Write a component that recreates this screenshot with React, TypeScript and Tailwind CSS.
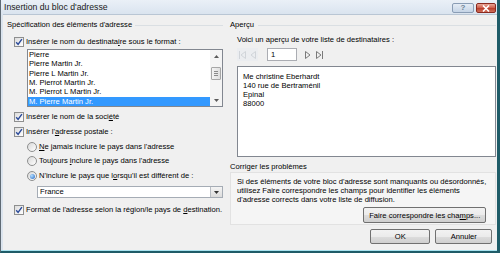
import React from "react";

function CheckBox() {
  return (
    <span className="flex h-[10px] w-[10px] shrink-0 items-center justify-center border border-[#8e8f8f] bg-[linear-gradient(135deg,#dcdcdc,#ffffff)]">
      <svg width="8" height="8" viewBox="0 0 8 8">
        <path d="M1.2 4.2 L3.1 6.4 L6.9 1.2" fill="none" stroke="#2a4a9a" strokeWidth="1.4" />
      </svg>
    </span>
  );
}

function Radio({ checked = false }: { checked?: boolean }) {
  return (
    <span className="flex h-[10px] w-[10px] shrink-0 items-center justify-center rounded-full border border-[#8e8f8f] bg-[linear-gradient(135deg,#d8d8d8,#ffffff)]">
      {checked && (
        <span className="h-[5px] w-[5px] rounded-full bg-[radial-gradient(circle_at_35%_35%,#b6e0ff,#1f63c4)]" />
      )}
    </span>
  );
}

function Button({ children, className = "" }: { children: React.ReactNode; className?: string }) {
  return (
    <div
      className={
        "flex items-center justify-center rounded-[2px] border border-[#707070] bg-[linear-gradient(#f2f2f2,#ebebeb_50%,#dddddd_50%,#cfcfcf)] " +
        className
      }
    >
      {children}
    </div>
  );
}

const names = [
  "Pierre",
  "Pierre Martin Jr.",
  "Pierre L Martin Jr.",
  "M. Pierrot Martin Jr.",
  "M. Pierrot L Martin Jr.",
  "M. Pierre Martin Jr.",
];

export default function App() {
  return (
    <div className="flex h-[253px] w-[500px] flex-col overflow-hidden whitespace-nowrap border-l border-r-[3px] border-b-[2px] border-l-[#5f6a74] border-r-[#1f5c68] border-b-[#1f5c68] bg-[#dbe4ee] font-['Liberation_Sans',Arial,sans-serif] text-[7.6px] leading-none text-black">
      {/* title bar */}
      <div className="flex h-[14px] shrink-0 items-start bg-[linear-gradient(#eaf0f7,#dae4ef)] pl-[3px] pr-[1px]">
        <span className="mt-[3px] text-[8.7px] text-[#1a1a1a]">Insertion du bloc d'adresse</span>
        <div className="ml-auto mt-[3px] flex gap-[2px]">
          <div className="flex h-[10px] w-[22px] items-center justify-center rounded-[2px] border border-[#8a9db5] bg-[linear-gradient(#e4ecf5,#c5d4e6)] text-[8px] font-bold text-[#6c7f96]">
            ?
          </div>
          <div className="flex h-[10px] w-[20px] items-center justify-center rounded-[2px] border border-[#8a2a20] bg-[linear-gradient(#e9a797,#cd5a48_50%,#b83a28_50%,#d0705a)]">
            <svg width="8" height="7" viewBox="0 0 8 7">
              <path d="M1 0.5 L7 6.5 M7 0.5 L1 6.5" stroke="#fff" strokeWidth="1.6" />
            </svg>
          </div>
        </div>
      </div>

      {/* content */}
      <div className="ml-[2px] flex flex-1 border-t border-[#b9c6d4] bg-[#f0f0f0] pt-[4px]">
        {/* left column */}
        <div className="flex w-[223px] shrink-0 flex-col pl-[4px] pr-[3px]">
          <div className="flex h-[12px] items-center">
            <span>Spécification des éléments d'adresse</span>
            <span className="ml-[3px] h-px flex-1 bg-[#dadfe3]" />
          </div>

          <div className="ml-[7px] mt-[6px] flex h-[10px] items-center gap-[2px]">
            <CheckBox />
            <span>
              Insérer le nom du destinata<u>i</u>re sous le format :
            </span>
          </div>

          <div className="ml-[20px] mt-[2px] flex h-[58px] border border-[#828790] bg-white">
            <div className="flex flex-1 flex-col">
              {names.map((n, i) => (
                <div
                  key={n}
                  className={
                    "flex flex-1 items-center pl-[1px] " + (i === 5 ? "bg-[#3399ff] text-white" : "")
                  }
                >
                  {n}
                </div>
              ))}
            </div>
            <div className="flex w-[12px] flex-col items-center bg-[#f4f4f4]">
              <div className="flex h-[12px] items-center justify-center">
                <svg width="5" height="3" viewBox="0 0 5 3">
                  <path d="M0 3 L2.5 0 L5 3 Z" fill="#5a5a5a" />
                </svg>
              </div>
              <div className="mt-[5px] flex h-[13px] w-[10px] flex-col items-center justify-center gap-[1px] rounded-[1px] border border-[#a6a6a6] bg-[linear-gradient(90deg,#f3f3f3,#dedede)]">
                <span className="h-px w-[4px] bg-[#8a8a8a]" />
                <span className="h-px w-[4px] bg-[#8a8a8a]" />
                <span className="h-px w-[4px] bg-[#8a8a8a]" />
              </div>
              <div className="mt-auto flex h-[12px] items-center justify-center">
                <svg width="5" height="3" viewBox="0 0 5 3">
                  <path d="M0 0 L2.5 3 L5 0 Z" fill="#5a5a5a" />
                </svg>
              </div>
            </div>
          </div>

          <div className="ml-[7px] mt-[5px] flex h-[10px] items-center gap-[2px]">
            <CheckBox />
            <span>
              Insérer le nom de la soci<u>é</u>té
            </span>
          </div>

          <div className="ml-[7px] mt-[5px] flex h-[10px] items-center gap-[2px]">
            <CheckBox />
            <span>
              Insérer l'<u>a</u>dresse postale :
            </span>
          </div>

          <div className="ml-[20px] mt-[5px] flex h-[10px] items-center gap-[2px]">
            <Radio />
            <span>
              <u>N</u>e jamais inclure le pays dans l'adresse
            </span>
          </div>
          <div className="ml-[20px] mt-[4px] flex h-[10px] items-center gap-[2px]">
            <Radio />
            <span>
              Toujours <u>i</u>nclure le pays dans l'adresse
            </span>
          </div>
          <div className="ml-[20px] mt-[5px] flex h-[10px] items-center gap-[2px]">
            <Radio checked />
            <span>
              N'inclure le pays que l<u>o</u>rsqu'il est différent de :
            </span>
          </div>

          <div className="ml-[30px] mt-[5px] flex h-[12px] items-center border border-[#a5acb5] bg-white pl-[2px]">
            <span>France</span>
            <div className="ml-auto flex h-full w-[12px] items-center justify-center border-l border-[#b8bcc2] bg-[linear-gradient(#f4f4f4,#dcdcdc)]">
              <svg width="5" height="3" viewBox="0 0 5 3">
                <path d="M0 0 L2.5 3 L5 0 Z" fill="#333" />
              </svg>
            </div>
          </div>

          <div className="ml-[7px] mt-[7px] flex h-[10px] items-center gap-[2px]">
            <CheckBox />
            <span>
              Format de l'adresse selon la région/le pays de <u>d</u>estination.
            </span>
          </div>
        </div>

        {/* right column */}
        <div className="flex flex-1 flex-col pl-[4px] pr-[1px]">
          <div className="flex h-[12px] items-center">
            <span>Aperçu</span>
            <span className="ml-[4px] h-px flex-1 bg-[#dadfe3]" />
          </div>

          <div className="ml-[7px] mt-[4px] flex h-[10px] items-center">
            Voici un aperçu de votre liste de destinataires :
          </div>

          <div className="ml-[7px] mt-[3px] flex h-[13px] items-center">
            <div className="flex h-full w-[21px] items-center justify-around bg-[#ebedf0]">
              <svg width="7" height="8" viewBox="0 0 7 8">
                <path d="M0.5 0 V8 M6.5 0.5 L2 4 L6.5 7.5 Z" fill="none" stroke="#d0d4d9" />
              </svg>
              <svg width="6" height="8" viewBox="0 0 6 8">
                <path d="M5.5 0.5 L1 4 L5.5 7.5 Z" fill="none" stroke="#d0d4d9" />
              </svg>
            </div>
            <div className="ml-[9px] flex h-full w-[30px] items-center border border-[#abadb3] bg-white pl-[3px]">
              1
            </div>
            <div className="ml-[8px] flex items-center gap-[5px]">
              <svg width="6" height="8" viewBox="0 0 6 8">
                <path d="M0.5 0.5 L5 4 L0.5 7.5 Z" fill="none" stroke="#7a7a7a" />
              </svg>
              <svg width="7" height="8" viewBox="0 0 7 8">
                <path d="M0.5 0.5 L5 4 L0.5 7.5 Z M6.5 0 V8" fill="none" stroke="#7a7a7a" />
              </svg>
            </div>
          </div>

          <div className="ml-[7px] mt-[5px] flex h-[91px] flex-col border border-[#828790] bg-white pl-[5px] pt-[5px] leading-[9px]">
            <span>Me christine Eberhardt</span>
            <span>140 rue de Bertraménil</span>
            <span>Epinal</span>
            <span>88000</span>
          </div>

          <div className="mt-[4px] flex h-[11px] items-center">Corriger les problèmes</div>

          <div className="flex h-[53px] flex-col border border-[#e2e2e2] bg-[#f5f5f5] pl-[6px] pr-[9px] pt-[4px] leading-[9px]">
            <span>Si des éléments de votre bloc d'adresse sont manquants ou désordonnés,</span>
            <span>utilisez Faire correspondre les champs pour identifier les éléments</span>
            <span>d'adresse corrects dans votre liste de diffusion.</span>
            <Button className="ml-auto mt-[3px] h-[16px] w-[123px] shrink-0">
              <span>
                Faire correspondre les cha<u>m</u>ps...
              </span>
            </Button>
          </div>

          <div className="mt-[4px] flex h-[15px] justify-end gap-[5px] pr-[4px]">
            <Button className="w-[60px] border-[#3c7fb1]">OK</Button>
            <Button className="w-[57px]">Annuler</Button>
          </div>
        </div>
      </div>
      <div className="h-px shrink-0 bg-[#a8e2ef]" />
    </div>
  );
}
